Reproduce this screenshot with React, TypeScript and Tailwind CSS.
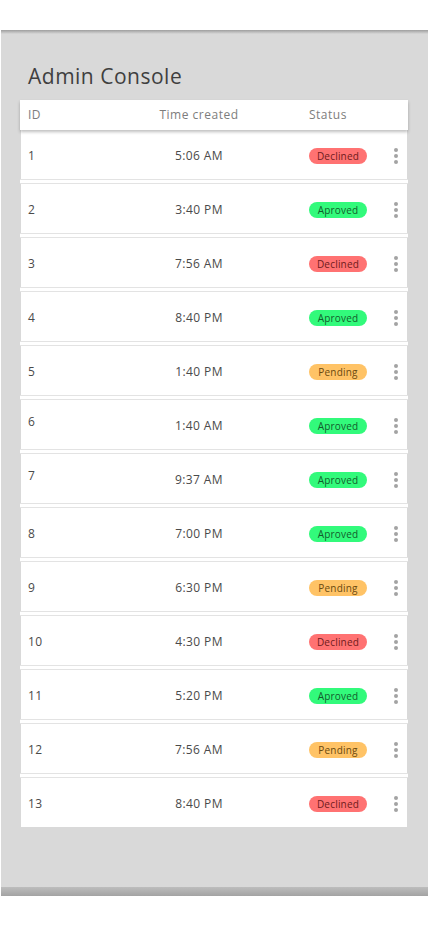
import React from "react";

type Status = "Declined" | "Aproved" | "Pending";

const rows: { id: number; time: string; status: Status; idShift?: boolean }[] = [
  { id: 1, time: "5:06 AM", status: "Declined" },
  { id: 2, time: "3:40 PM", status: "Aproved" },
  { id: 3, time: "7:56 AM", status: "Declined" },
  { id: 4, time: "8:40 PM", status: "Aproved" },
  { id: 5, time: "1:40 PM", status: "Pending" },
  { id: 6, time: "1:40 AM", status: "Aproved", idShift: true },
  { id: 7, time: "9:37 AM", status: "Aproved", idShift: true },
  { id: 8, time: "7:00 PM", status: "Aproved" },
  { id: 9, time: "6:30 PM", status: "Pending" },
  { id: 10, time: "4:30 PM", status: "Declined" },
  { id: 11, time: "5:20 PM", status: "Aproved" },
  { id: 12, time: "7:56 AM", status: "Pending" },
  { id: 13, time: "8:40 PM", status: "Declined" },
];

function Badge({ status }: { status: Status }) {
  const cls =
    status === "Declined"
      ? "bg-[#ff7272] text-[#6e1c1c]"
      : status === "Aproved"
      ? "bg-[#32fa7b] text-[#135c2c]"
      : "bg-[#ffc366] text-[#6b4a10]";
  return (
    <div
      className={`w-[58px] h-[16px] rounded-full flex items-center justify-center text-[10px] leading-none tracking-[0.2px] ${cls}`}
    >
      {status}
    </div>
  );
}

function Dots() {
  return (
    <div className="flex flex-col gap-[2px] items-center mr-[9px] ml-auto">
      <div className="w-[4px] h-[4px] rounded-full bg-[#a3a3a3]" />
      <div className="w-[4px] h-[4px] rounded-full bg-[#a3a3a3]" />
      <div className="w-[4px] h-[4px] rounded-full bg-[#a3a3a3]" />
    </div>
  );
}

export default function App() {
  return (
    <div
      className="w-[428px] h-[927px] bg-white relative"
      style={{ fontFamily: '"Open Sans", "Noto Sans", sans-serif' }}
    >
      <div className="h-[30px]" />
      <div className="ml-[1px] w-[427px] h-[866px] bg-[#d9d9d9] flex flex-col">
        <div className="h-[4px] bg-gradient-to-b from-[#9e9e9e] to-[#d9d9d9]" />
        <div className="pl-[27px] pt-[29px] h-[66px] text-[21px] leading-[26px] text-[#3f3f3f] tracking-[0.5px]">
          Admin Console
        </div>
        <div className="relative z-10 ml-[19px] w-[388px] h-[30px] bg-white flex items-center pl-2 text-[12px] text-[#7d7d7d] tracking-[0.5px] shadow-[0_2px_3px_rgba(0,0,0,0.25)]">
          <div className="w-[100px]">ID</div>
          <div className="w-[142px] text-center">Time created</div>
          <div className="w-[39px]" />
          <div>Status</div>
        </div>
        <div className="ml-[20px] w-[386px] flex flex-col">
          {rows.map((r, i) => (
            <React.Fragment key={r.id}>
              {i > 0 && (
                <div className="-mx-px h-[5px] bg-white border-y border-[#e3e3e3]" />
              )}
              <div className="h-[49px] bg-white flex items-center pl-[7px] pt-[3px] text-[12px] text-[#4a4a4a] tracking-[0.4px]">
                <div className={`w-[100px] ${r.idShift ? "-mt-[8px]" : ""}`}>{r.id}</div>
                <div className="w-[142px] text-center">{r.time}</div>
                <div className="w-[39px]" />
                <Badge status={r.status} />
                <Dots />
              </div>
            </React.Fragment>
          ))}
        </div>
        <div className="flex-1" />
        <div className="h-[9px] bg-gradient-to-b from-[#bdbdbd] to-[#a3a3a3]" />
      </div>
    </div>
  );
}
